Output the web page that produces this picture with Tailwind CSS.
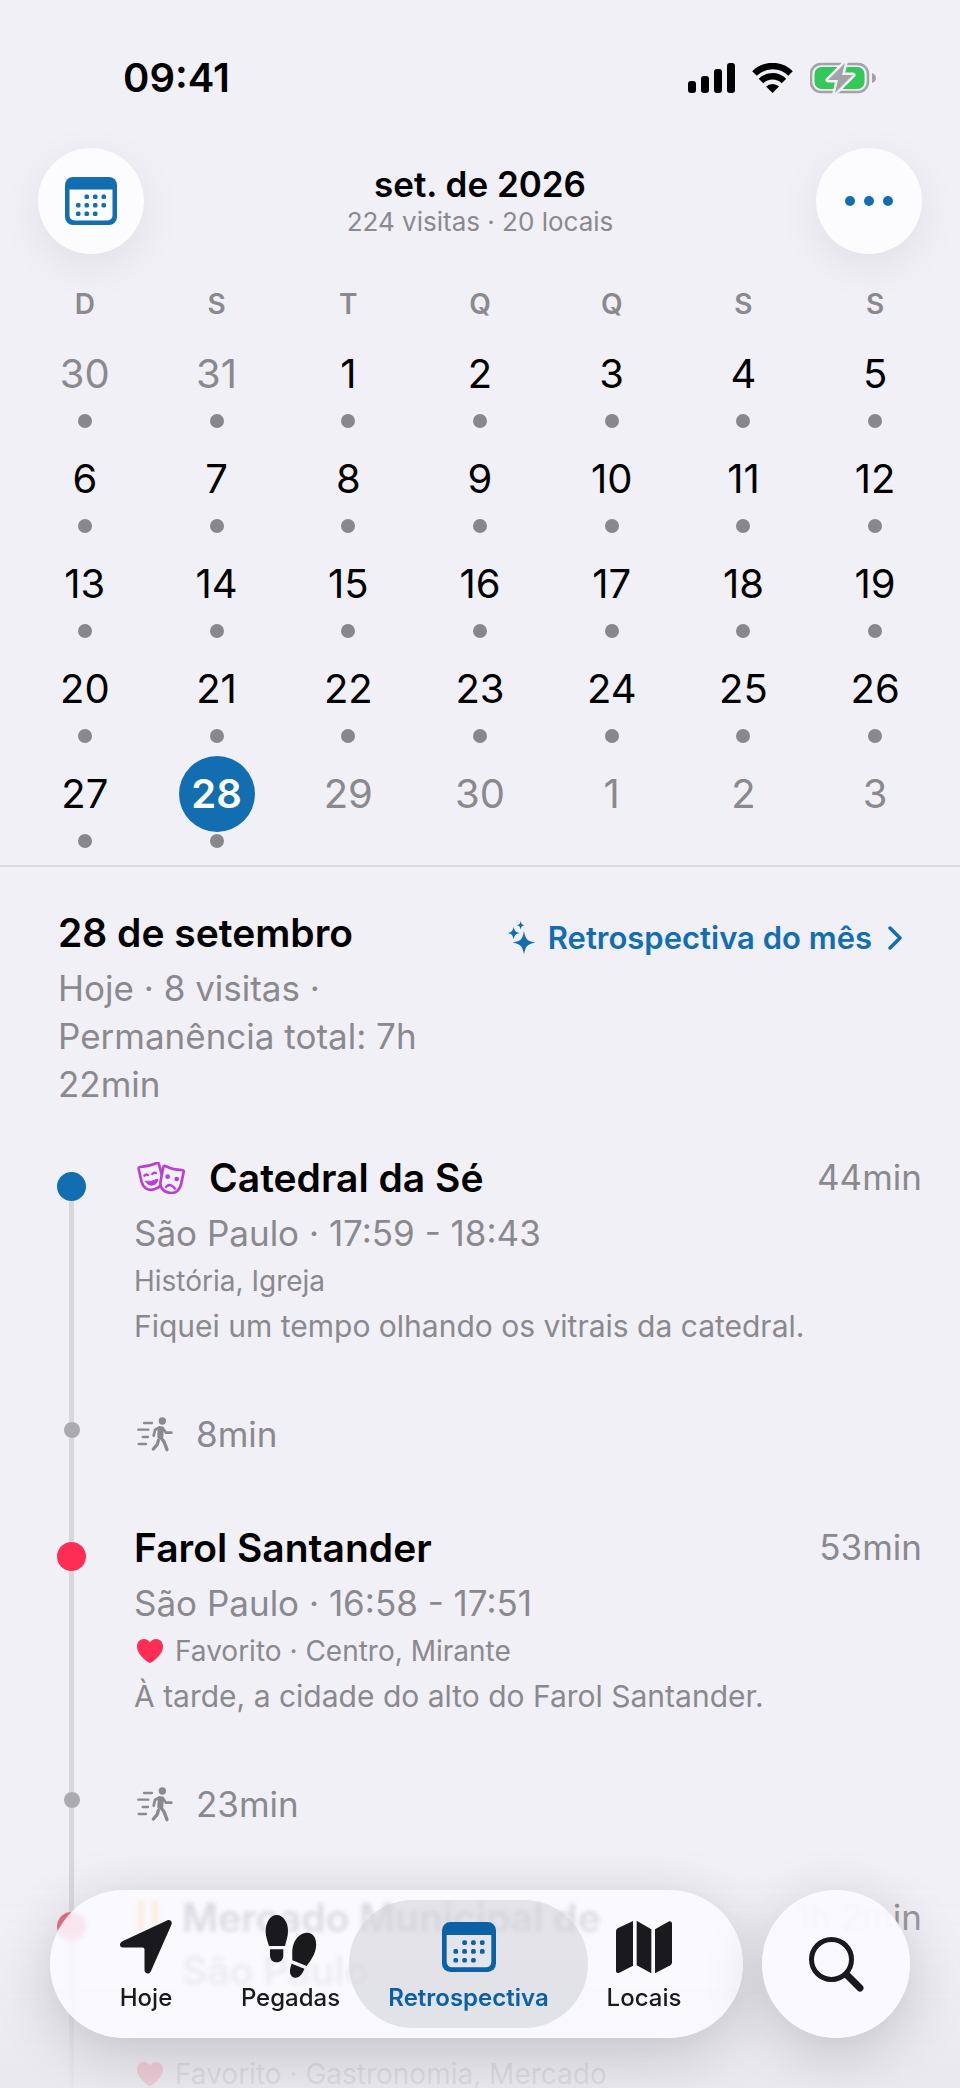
<!DOCTYPE html>
<html lang="pt-BR">
<head>
    <meta charset="UTF-8">
    <meta name="viewport" content="width=device-width, initial-scale=1.0">
    <title>Retrospectiva</title>
    <script src="https://cdn.jsdelivr.net/npm/@tailwindcss/browser@4"></script>
</head>
<body class="h-screen overflow-hidden flex flex-col bg-[#f1f0f6] text-black font-['Inter','Liberation_Sans',sans-serif]">

    <!-- Shared icons -->
    <svg class="hidden" aria-hidden="true">
        <symbol id="icon-calendar" viewBox="0 0 52 48">
            <rect width="52" height="48" rx="8" fill="currentColor"/>
            <path class="fill-[var(--face)]" d="M4.500 12.500h43v26a5 5 0 0 1-5 5h-33a5 5 0 0 1-5-5z"/>
            <g fill="currentColor">
                <rect x="19.500" y="17.500" width="4.500" height="4.500" rx="1.500"/><rect x="28" y="17.500" width="4.500" height="4.500" rx="1.500"/><rect x="36.500" y="17.500" width="4.500" height="4.500" rx="1.500"/>
                <rect x="11" y="26" width="4.500" height="4.500" rx="1.500"/><rect x="19.500" y="26" width="4.500" height="4.500" rx="1.500"/><rect x="28" y="26" width="4.500" height="4.500" rx="1.500"/><rect x="36.500" y="26" width="4.500" height="4.500" rx="1.500"/>
                <rect x="11" y="34.500" width="4.500" height="4.500" rx="1.500"/><rect x="19.500" y="34.500" width="4.500" height="4.500" rx="1.500"/><rect x="28" y="34.500" width="4.500" height="4.500" rx="1.500"/>
            </g>
        </symbol>
        <symbol id="icon-walk" viewBox="18 18 114 106">
            <circle cx="97" cy="32" r="11" fill="currentColor"/>
            <g fill="none" stroke="currentColor" stroke-linecap="round" stroke-linejoin="round">
                <path stroke-width="7" d="M42 38h24M25 58h30M38 80h16M26 101h22"/>
                <path stroke-width="18" d="M92 57l-1 21"/>
                <path stroke-width="8" d="M88 51l-13 8-4 17M98 53l10 14h16"/>
                <path stroke-width="10" d="M93 82l9 12 9 24M85 90l-3 12-12 14"/>
            </g>
        </symbol>
        <symbol id="icon-heart" viewBox="0 0 26 24">
            <path fill="currentColor" d="M13 24C11 23.500 0 16 0 7.500 0 3 3 0 7 0c2.600 0 4.700 1.300 6 3.500C14.300 1.300 16.400 0 19 0c4 0 7 3 7 7.500C26 16 15 23.500 13 24z"/>
        </symbol>
    </svg>

    <!-- Status bar -->
    <div class="shrink-0 flex justify-between items-start h-[148px] pt-14 pl-[123px] pr-[84px]">
        <span class="text-[40px] leading-[44px] font-semibold">09:41</span>
        <div class="flex items-center gap-[17px] h-11">
            <svg class="w-[47px] h-[30px]" viewBox="0 0 47 30">
                <rect y="18" width="8" height="12" rx="3"/><rect x="13" y="13" width="8" height="17" rx="3"/>
                <rect x="26" y="6" width="8" height="24" rx="3"/><rect x="39" width="8" height="30" rx="3"/>
            </svg>
            <svg class="w-[41px] h-[30px]" viewBox="0 0 41 30">
                <g fill="none" stroke="#000" stroke-width="6.500">
                    <path d="M2.500 10.500a25.500 25.500 0 0 1 36 0"/>
                    <path d="M9 18a16.500 16.500 0 0 1 23 0"/>
                </g>
                <path d="M20.500 30l-6.500-6.500a9.500 9.500 0 0 1 13 0z"/>
            </svg>
            <svg class="w-[66px] h-8" viewBox="0 0 66 32">
                <rect x="1" y="2" width="57" height="28" rx="10" fill="none" stroke="#a3a2a8" stroke-width="2.500"/>
                <path fill="#a3a2a8" d="M62 11c3 1 4 3 4 5s-1 4-4 5z"/>
                <rect x="4.500" y="5" width="50" height="22" rx="7" fill="#34c759"/>
                <path fill="#a3a2a8" stroke="#f1f0f6" stroke-width="5" stroke-linejoin="round" paint-order="stroke" d="M35 1L18 18h10l-3 13 18-18H32z"/>
            </svg>
        </div>
    </div>

    <!-- Header -->
    <header class="shrink-0 flex justify-between items-center px-[38px]">
        <button aria-label="Calendário" class="size-[106px] rounded-full bg-[#fcfcfe] text-[#126eb0] flex items-center justify-center shadow-[0_12px_44px_rgba(0,0,0,0.07)]">
            <svg class="w-[52px] h-12 [--face:#fcfcfe]"><use href="#icon-calendar"/></svg>
        </button>
        <div class="text-center">
            <h1 class="text-[35px] leading-[42px] font-semibold">set. de 2026</h1>
            <p class="text-[26px] leading-[34px] text-[#8a898e]">224 visitas · 20 locais</p>
        </div>
        <button aria-label="Mais" class="size-[106px] rounded-full bg-[#fcfcfe] text-[#126eb0] flex items-center justify-center shadow-[0_12px_44px_rgba(0,0,0,0.07)]">
            <svg class="w-12 h-2.5" viewBox="0 0 48 10" fill="currentColor"><circle cx="5" cy="5" r="5"/><circle cx="24" cy="5" r="5"/><circle cx="43" cy="5" r="5"/></svg>
        </button>
    </header>

    <!-- Month grid -->
    <section class="shrink-0 px-[19px] pb-1 border-b-2 border-[#dbdae0]">
        <div class="grid grid-cols-7 mt-[30px] text-center text-[28px] leading-10 font-semibold text-[#8a898e]">
            <span>D</span><span>S</span><span>T</span><span>Q</span><span>Q</span><span>S</span><span>S</span>
        </div>
        <div id="days" class="grid grid-cols-7 mt-3"></div>
    </section>

    <!-- Day summary -->
    <section class="shrink-0 flex justify-between items-start gap-5 px-[58px] pt-10">
        <div>
            <h2 class="text-[39px] leading-[52px] font-semibold">28 de setembro</h2>
            <p class="mt-[5px] text-[35px] leading-[48px] text-[#8a898e]">Hoje · 8 visitas · Permanência total: 7h 22min</p>
        </div>
        <a href="#" class="shrink-0 flex items-center mt-[9px] text-[31px] leading-[44px] font-semibold text-[#126eb0]">
            <svg class="w-7 h-[34px] mr-3" viewBox="18 20 84 102" fill="currentColor">
                <path d="M66 50c5 26 9 30 34 35-25 5-29 9-34 35-5-26-9-30-34-35 25-5 29-9 34-35z"/>
                <path d="M35 37c3 13 6 16 18 19-12 3-15 6-18 19-3-13-6-16-18-19 12-3 15-6 18-19z"/>
                <path d="M56 20c2 9 4 11 12 13-8 2-10 4-12 13-2-9-4-11-12-13 8-2 10-4 12-13z"/>
            </svg>
            Retrospectiva do mês
            <svg class="w-3.5 h-6 ml-4" viewBox="0 0 14 24" fill="none" stroke="currentColor" stroke-width="3.500" stroke-linecap="round" stroke-linejoin="round"><path d="M2 2l10 10L2 22"/></svg>
        </a>
    </section>

    <!-- Timeline -->
    <ol class="mt-[43px] pl-[57px] pr-[38px] text-[#8a898e]">
        <li class="flex gap-12">
            <div class="w-[29px] shrink-0 flex flex-col items-center">
                <i class="h-[21px]"></i>
                <i class="size-[29px] rounded-full bg-[#126eb0]"></i>
                <i class="w-[5px] flex-1 bg-[#d8d7dc]"></i>
            </div>
            <div class="flex-1 pb-[63px]">
                <div class="flex items-center">
                    <svg class="w-12 h-8 ml-[3px] mr-6 text-[#b93fd3]" viewBox="20 24 144 96" fill="none" stroke="currentColor" stroke-width="8" stroke-linejoin="round" stroke-linecap="round">
                        <path d="M25 45q-1-5 4-6 28-2 50-12 6-2 7 4l9 34c4 22-6 36-24 41s-32-4-37-22z"/>
                        <path d="M99 39q1-5 6-3 24 12 50 12 6 1 5 6l-8 38c-6 20-19 28-37 24s-28-18-24-36z" class="fill-[#f1f0f6]"/>
                        <path stroke-width="7" d="M42 65q5-6 11-2M66 60q5-6 11-3M107 99q13-14 27 5"/>
                        <path fill="currentColor" stroke-width="3" d="M46 82q18 3 36-7c2 19-27 27-36 7z"/>
                        <circle cx="112" cy="68" r="7" fill="currentColor" stroke="none"/><circle cx="139" cy="75" r="7" fill="currentColor" stroke="none"/>
                    </svg>
                    <h3 class="flex-1 text-[39px] leading-[53px] font-semibold text-black">Catedral da Sé</h3>
                    <span class="text-[35px]">44min</span>
                </div>
                <p class="mt-[5px] text-[35px] leading-[48px]">São Paulo · 17:59 - 18:43</p>
                <p class="mt-1 text-[28px] leading-10">História, Igreja</p>
                <p class="mt-1 text-[30px] leading-[42px]">Fiquei um tempo olhando os vitrais da catedral.</p>
            </div>
        </li>
        <li class="flex gap-12">
            <div class="w-[29px] shrink-0 flex flex-col items-center">
                <i class="w-[5px] h-3 bg-[#d8d7dc]"></i>
                <i class="size-4 rounded-full bg-[#abaaaf]"></i>
                <i class="w-[5px] flex-1 bg-[#d8d7dc]"></i>
            </div>
            <div class="flex-1 flex items-center pb-[63px]">
                <svg class="w-[38px] h-9 ml-0.5 mr-[22px]"><use href="#icon-walk"/></svg>
                <span class="text-[35px] leading-[48px]">8min</span>
            </div>
        </li>
        <li class="flex gap-12">
            <div class="w-[29px] shrink-0 flex flex-col items-center">
                <i class="w-[5px] h-[21px] bg-[#d8d7dc]"></i>
                <i class="size-[29px] rounded-full bg-[#ff2d55]"></i>
                <i class="w-[5px] flex-1 bg-[#d8d7dc]"></i>
            </div>
            <div class="flex-1 pb-[63px]">
                <div class="flex items-center">
                    <h3 class="flex-1 text-[39px] leading-[53px] font-semibold text-black">Farol Santander</h3>
                    <span class="text-[35px]">53min</span>
                </div>
                <p class="mt-[5px] text-[35px] leading-[48px]">São Paulo · 16:58 - 17:51</p>
                <p class="mt-1 text-[28px] leading-10 flex items-center">
                    <svg class="w-[26px] h-6 ml-[3px] mr-3 text-[#ff2d55]"><use href="#icon-heart"/></svg>
                    Favorito · Centro, Mirante
                </p>
                <p class="mt-1 text-[30px] leading-[42px]">À tarde, a cidade do alto do Farol Santander.</p>
            </div>
        </li>
        <li class="flex gap-12">
            <div class="w-[29px] shrink-0 flex flex-col items-center">
                <i class="w-[5px] h-3 bg-[#d8d7dc]"></i>
                <i class="size-4 rounded-full bg-[#abaaaf]"></i>
                <i class="w-[5px] flex-1 bg-[#d8d7dc]"></i>
            </div>
            <div class="flex-1 flex items-center pb-[63px]">
                <svg class="w-[38px] h-9 ml-0.5 mr-[22px]"><use href="#icon-walk"/></svg>
                <span class="text-[35px] leading-[48px]">23min</span>
            </div>
        </li>
        <li class="flex gap-12">
            <div class="w-[29px] shrink-0 flex flex-col items-center">
                <i class="w-[5px] h-[21px] bg-[#d8d7dc]"></i>
                <i class="size-[29px] rounded-full bg-[#ea5577]"></i>
                <i class="w-[5px] flex-1 bg-[#d8d7dc]"></i>
            </div>
            <div class="flex-1">
                <div class="flex items-start">
                    <svg class="w-5 h-9 mt-2 ml-1 mr-6 text-[#ff9500]" viewBox="0 0 20 36" fill="none" stroke="currentColor" stroke-width="6" stroke-linecap="round"><path d="M3 4v28M17 4v28"/></svg>
                    <h3 class="flex-1 text-[39px] leading-[53px] font-semibold text-black">Mercado Municipal de<br><span class="text-black/60">São Paulo</span></h3>
                    <span class="text-[35px] leading-[53px]">1h 2min</span>
                </div>
                <p class="mt-[57px] text-[28px] leading-10 flex items-center">
                    <svg class="w-[26px] h-6 ml-[3px] mr-3 text-[#ff2d55]"><use href="#icon-heart"/></svg>
                    Favorito · Gastronomia, Mercado
                </p>
            </div>
        </li>
    </ol>

    <!-- Fade under the tab bar -->
    <div class="fixed inset-x-0 bottom-0 h-[240px] pointer-events-none bg-linear-to-b from-[#f1f0f6]/0 from-10% via-[#efeef3]/25 via-40% to-[#e9e8ed]/85 to-90%"></div>

    <!-- Tab bar -->
    <div class="fixed inset-x-[50px] bottom-[50px] h-[148px] flex gap-[19px]">
        <nav class="flex-1 grid grid-cols-[172fr_117fr_239fr_112fr] py-2.5 pl-2.5 pr-[43px] rounded-full bg-[#fafaff]/86 backdrop-blur-[2px] shadow-[0_14px_60px_rgba(0,0,0,0.18)] text-[24px] leading-7 font-medium text-[#1a191e]">
            <a href="#" class="flex flex-col items-center pt-5">
                <svg class="w-[52px] h-[54px]" viewBox="0 0 52 54"><path fill="currentColor" d="M47 .4c3-1.200 5.500 1 4.500 4.200L31 51c-1.700 4-6.500 3-6.500-1V29.500c0-1.300-.6-2-2-2H3C-.8 27.500-1 23 2.400 21.300z"/></svg>
                <span class="mt-2.5">Hoje</span>
            </a>
            <a href="#" class="flex flex-col items-center pt-[15px]">
                <svg class="w-[52px] h-[63px]" viewBox="0 0 156 189" fill="currentColor">
                    <path d="M35 0c19 0 35 22 34 48 0 16-5 30-9 45H12C8 78 2 66 2 50 2 22 16 0 35 0zM15 103h40v17c0 14-8 22-20 22s-20-8-20-22z"/>
                    <path d="M132 54c17 3 25 24 20 48-4 20-16 36-27 51L82 136c0-18-2-34 4-50 9-22 28-36 46-32zM80 146l38 15c-6 17-16 28-28 27-18-3-18-22-10-42z"/>
                </svg>
                <span class="mt-1.5">Pegadas</span>
            </a>
            <a href="#" aria-current="page" class="flex flex-col items-center pt-[22px] rounded-full bg-[#d4d4db]/60 font-semibold text-[#0a61a6]">
                <svg class="w-[54px] h-[50px] [--face:#e4e5ec]"><use href="#icon-calendar"/></svg>
                <span class="mt-3">Retrospectiva</span>
            </a>
            <a href="#" class="flex flex-col items-center pt-5">
                <svg class="w-14 h-[54px]" viewBox="0 0 168 158" fill="currentColor">
                    <path d="M51 1v134L10 156c-6 2-10 0-10-6V32q0-6 5-9z"/>
                    <path d="M62 0l44 26v132l-44-24z"/>
                    <path d="M117 26l40-23c6-3 11 0 11 6v116q0 6-5 9l-46 24z"/>
                </svg>
                <span class="mt-2.5">Locais</span>
            </a>
        </nav>
        <button aria-label="Buscar" class="size-[148px] rounded-full bg-[#fafaff]/94 backdrop-blur-[2px] shadow-[0_14px_60px_rgba(0,0,0,0.18)] text-[#1a191e] flex items-center justify-center">
            <svg class="w-[55px] h-[55px]" viewBox="0 0 55 55" fill="none" stroke="currentColor" stroke-linecap="round"><circle cx="22.500" cy="22.500" r="20" stroke-width="5"/><path stroke-width="7" d="M38 38l13 13"/></svg>
        </button>
    </div>

    <script>
        // August tail, September, October head
        const days = [30, 31, ...Array.from({ length: 30 }, (_, i) => i + 1), 1, 2, 3];
        const today = 29;

        document.getElementById('days').innerHTML = days.map((day, i) => {
            const outside = i < 2 || i > today;
            const style = i === today
                ? 'bg-[#126eb0] text-white font-semibold'
                : outside ? 'text-[#8a898e]' : '';
            const dot = i <= today ? '<i class="mt-0.5 size-3.5 rounded-full bg-[#88878c]"></i>' : '';
            return `
                <button class="flex flex-col items-center h-[105px]">
                    <span class="size-[76px] flex items-center justify-center rounded-full text-[40px] ${style}">${day}</span>
                    ${dot}
                </button>
            `;
        }).join('');
    </script>
</body>
</html>
